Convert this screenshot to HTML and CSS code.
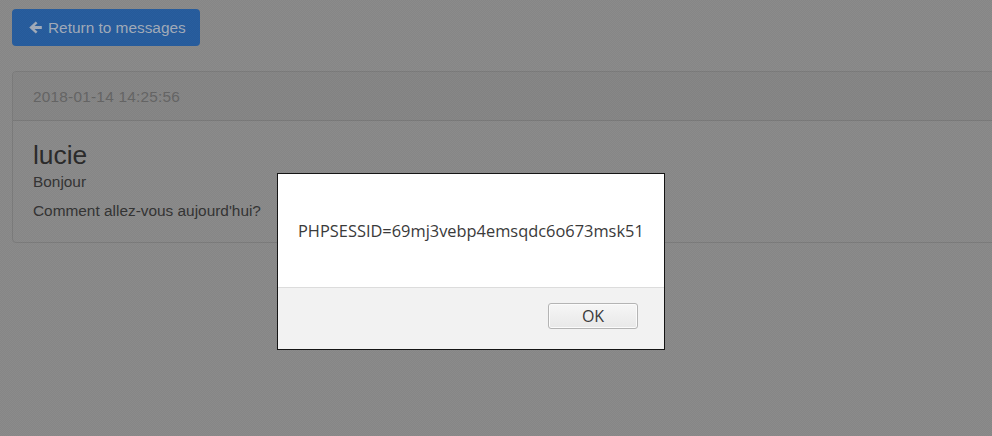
FILE: index.html
```html
<!DOCTYPE html>
<html>
<head>
<meta charset="utf-8">
<link rel="stylesheet" href="styles.css">
</head>
<body>
<div class="page">
  <a class="btn-return"><svg class="arrow" width="15" height="15" viewBox="0 0 14 14"><path d="M7.2 1.4 L1.2 7 L7.2 12.6 L8.9 10.9 L6.1 8.3 H12.9 V5.7 H6.1 L8.9 3.1 Z" fill="currentColor"/></svg>Return to messages</a>
  <div class="panel">
    <div class="panel-heading">2018-01-14 14:25:56</div>
    <div class="panel-body">
      <h3 class="author">lucie</h3>
      <p class="line first">Bonjour</p>
      <p class="line">Comment allez-vous aujourd'hui?</p>
    </div>
  </div>
</div>
<div class="shade"></div>
<div class="dialog">
  <div class="dialog-message">PHPSESSID=69mj3vebp4emsqdc6o673msk51</div>
  <div class="dialog-footer">
    <button class="ok">OK</button>
  </div>
</div>
</body>
</html>
```
FILE: styles.css
```css
html, body {
  margin: 0;
  padding: 0;
  height: 100%;
  overflow: hidden;
  background: #8b8b8b;
  font-family: "Liberation Sans", Arial, sans-serif;
  font-size: 15.4px;
  color: #303030;
}
.page {
  padding: 9px 0 0 12px;
}
.btn-return {
  display: inline-flex;
  align-items: center;
  gap: 5px;
  height: 37px;
  box-sizing: border-box;
  padding: 0 14px 0 16px;
  background: #285e9f;
  color: #a3adbb;
  border-radius: 4px;
  font-size: 15.4px;
}
.arrow { color: #a3adbb; }
.panel {
  margin-top: 25px;
  width: 1100px;
  border: 1px solid #7d7d7d;
  border-radius: 4px;
  background: #8b8b8b;
}
.panel-heading {
  height: 49px;
  box-sizing: border-box;
  padding: 16px 20px 0 20px;
  background: #878787;
  border-bottom: 1px solid #7b7b7b;
  color: #666;
  letter-spacing: 0.22px;
  border-radius: 4px 4px 0 0;
}
.panel-body {
  padding: 20px 20px 20px 20px;
}
.author {
  margin: 0 0 1px 0;
  font-size: 26.4px;
  font-weight: normal;
  line-height: 29px;
  color: #2c2c2c;
}
.line {
  margin: 0;
  line-height: 22px;
  color: #353535;
}
.line.first { margin-bottom: 7px; }
.shade {
  position: fixed;
  inset: 0;
  background-image: repeating-conic-gradient(rgba(0,0,0,0.035) 0 25%, rgba(0,0,0,0) 0 50%);
  background-size: 2px 2px;
}
.dialog {
  position: fixed;
  left: 277px;
  top: 173px;
  width: 388px;
  height: 177px;
  box-sizing: border-box;
  border: 1px solid #151515;
  background: #fff;
  display: flex;
  flex-direction: column;
  font-family: "Open Sans", "Noto Sans", sans-serif;
}
.dialog-message {
  height: 113px;
  display: flex;
  align-items: center;
  padding-left: 20px;
  font-size: 16.4px;
  color: #3a3a3a;
}
.dialog-footer {
  flex: 1;
  background: #f2f2f2;
  border-top: 1px solid #dcdcdc;
  display: flex;
  justify-content: flex-end;
  align-items: flex-start;
  padding: 15px 26px 0 0;
}
.ok {
  width: 90px;
  height: 26px;
  border: 1px solid #b4b4b4;
  border-radius: 3px;
  background: linear-gradient(#f6f6f6, #e8e8e8);
  box-shadow: inset 0 0 0 1px #fbfbfb;
  font-family: "Open Sans", "Noto Sans", sans-serif;
  font-size: 16px;
  color: #3a3a3a;
  padding: 0;
}
```
